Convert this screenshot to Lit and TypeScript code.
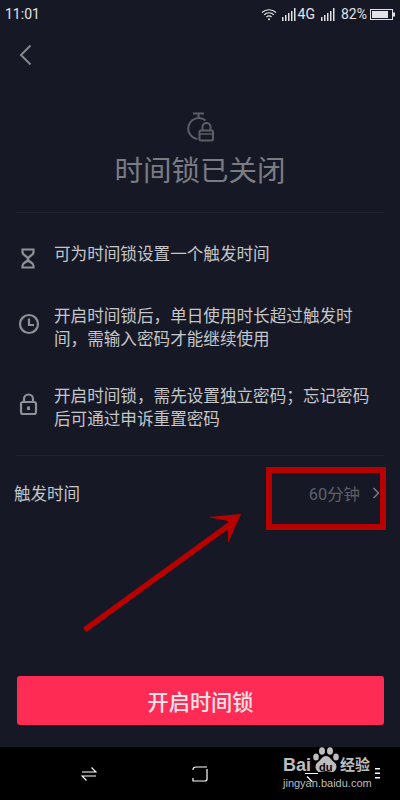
import { LitElement, html, css } from 'lit';
import { customElement } from 'lit/decorators.js';

@customElement('app-root')
export class AppRoot extends LitElement {
  static styles = css`
    :host {
      display: block;
      width: 400px;
      height: 800px;
      position: relative;
      overflow: hidden;
      background: #161925;
      font-family: 'Roboto', 'Noto Sans CJK SC', sans-serif;
    }
    .page {
      height: 800px;
      display: flex;
      flex-direction: column;
    }
    .status {
      height: 30px;
      flex: none;
      display: flex;
      align-items: center;
      justify-content: space-between;
      padding: 0 5px 2px;
      box-sizing: border-box;
      color: #e2e2e4;
      font-size: 14px;
    }
    .status-right {
      display: flex;
      align-items: center;
      font-size: 14px;
    }
    .status-right svg {
      display: block;
    }
    .wifi {
      margin-right: 5px;
    }
    .net {
      margin: 0 6px 0 2px;
    }
    .pct {
      margin: 0 3px 0 6px;
    }
    .nav {
      height: 50px;
      flex: none;
      padding-left: 18px;
      display: flex;
      align-items: center;
    }
    .hero {
      flex: none;
      height: 133px;
      display: flex;
      flex-direction: column;
      align-items: center;
      padding-top: 32px;
      box-sizing: border-box;
      border-bottom: 1px solid #1f222d;
      margin: 0 16px;
    }
    .hero-title {
      margin-top: 10px;
      font-size: 28.5px;
      line-height: 40px;
      color: #7b7c83;
    }
    .rules {
      flex: none;
      height: 243px;
      margin: 0 16px;
      box-sizing: border-box;
      border-bottom: 1px solid #1f222d;
      padding-top: 30px;
      display: flex;
      flex-direction: column;
      gap: 34px;
    }
    .rule {
      display: flex;
      align-items: flex-start;
      gap: 14px;
      font-size: 16.6px;
      line-height: 23px;
      color: #c5c6ca;
    }
    .rule:first-child {
      margin-bottom: 1px;
    }
    .rule svg {
      flex: none;
      width: 24px;
      height: 24px;
      margin-top: 7px;
    }
    .rule:first-child svg {
      margin-top: 3px;
    }
    .rule-text {
      width: 320px;
    }
    .trigger {
      flex: none;
      height: 74px;
      margin: 0 20px 0 14px;
      display: flex;
      align-items: center;
      justify-content: space-between;
      font-size: 16.5px;
      color: #c5c6ca;
    }
    .trigger-value {
      display: flex;
      align-items: center;
      gap: 12px;
      color: #5e6068;
      font-size: 16.4px;
    }
    .spacer {
      flex: 1;
    }
    .cta {
      flex: none;
      height: 49px;
      margin: 0 16px 22px 17px;
      border-radius: 3px;
      background: #fe2c55;
      color: #f6e3e8;
      font-size: 21.2px;
      font-weight: 500;
      display: flex;
      align-items: center;
      justify-content: center;
    }
    .softkeys {
      flex: none;
      height: 53px;
      background: #000;
      display: flex;
      align-items: center;
      padding-left: 81px;
      gap: 95px;
    }
    .softkeys svg {
      display: block;
    }
    .softkeys .menu {
      margin-left: -39px;
    }
    .mark {
      position: absolute;
      left: 283px;
      top: 747px;
      width: 90px;
      height: 53px;
      color: #bdbdbd;
    }
    .mark-bai {
      position: absolute;
      left: 0;
      top: 8px;
      font-family: 'Liberation Sans', sans-serif;
      font-size: 18px;
      font-weight: 700;
    }
    .mark-du {
      position: absolute;
      left: 36px;
      top: 14px;
      font-family: 'Liberation Sans', sans-serif;
      font-size: 11px;
      font-weight: 700;
      color: #000;
    }
    .mark-cn {
      position: absolute;
      left: 57px;
      top: 9px;
      font-size: 15px;
      font-weight: 700;
      line-height: 18px;
    }
    .mark-url {
      position: absolute;
      left: 0;
      top: 30px;
      font-family: 'Liberation Sans', sans-serif;
      font-size: 11px;
      white-space: nowrap;
    }
    .mark svg {
      position: absolute;
      left: 28px;
      top: 0;
    }
    .annot-box {
      position: absolute;
      left: 266px;
      top: 467px;
      width: 120px;
      height: 63px;
      box-sizing: border-box;
      border: 6px solid #b80000;
    }
    .annot-arrow {
      position: absolute;
      left: 0;
      top: 0;
    }
  `;

  render() {
    return html`
      <div class="page">
        <div class="status">
          <span>11:01</span>
          <div class="status-right">
            <svg class="wifi" width="16" height="13" viewBox="0 0 16 13" fill="none" stroke="#e2e2e4" stroke-width="1.2">
              <path d="M1 4.500C5 .8 11 .8 15 4.500" />
              <path d="M3.200 6.800C6 4.200 10 4.200 12.800 6.800" />
              <path d="M5.400 9C7 7.700 9 7.700 10.600 9" />
              <circle cx="8" cy="11.300" r="1" fill="#e2e2e4" stroke="none" />
            </svg>
            ${this.bars()}
            <span class="net">4G</span>
            ${this.bars()}
            <span class="pct">82%</span>
            <svg width="25" height="11" viewBox="0 0 25 11">
              <rect x="0.500" y="0.500" width="22" height="10" fill="none" stroke="#e2e2e4" />
              <rect x="2" y="2" width="16" height="7" fill="#e2e2e4" />
              <rect x="23" y="3.500" width="2" height="4" fill="#e2e2e4" />
            </svg>
          </div>
        </div>
        <div class="nav">
          <svg width="16" height="22" viewBox="0 0 16 22" fill="none" stroke="#85868c" stroke-width="2">
            <path d="M12.500 1.500 3 11l9.500 9.500" />
          </svg>
        </div>
        <div class="hero">
          <svg width="28" height="30" viewBox="0 0 28 30" fill="none" stroke="#5c5e65" stroke-width="2">
            <path d="M7 1.500h11M12.500 1.500V6" />
            <path d="M19.500 8.500A10.500 10.500 0 1 0 11.500 27" />
            <rect x="13.500" y="18.500" width="13.500" height="10" rx="1.500" />
            <path d="M16.500 18.500V15a4 4 0 0 1 8 0v3.500" />
            <path d="M14 22h12.500" stroke-width="1.500" />
          </svg>
          <div class="hero-title">时间锁已关闭</div>
        </div>
        <div class="rules">
          <div class="rule">
            <svg viewBox="0 0 24 24" fill="none" stroke="#8f9095" stroke-width="2.200">
              <path d="M5.500 3.500h13M6.500 3.500v3c0 3 5.500 3.500 5.500 6.500s-5.500 3.500-5.500 6.500v2h11v-2c0-3-5.500-3.500-5.500-6.500s5.500-3.500 5.500-6.500v-3" />
              <path d="M7 18.500c1-2 3-3 5-3s4 1 5 3" stroke-width="1.500" />
            </svg>
            <div class="rule-text">可为时间锁设置一个触发时间</div>
          </div>
          <div class="rule">
            <svg viewBox="0 0 24 24" fill="none" stroke="#8f9095" stroke-width="2.200">
              <circle cx="13" cy="12" r="9" />
              <path d="M13 6.500V13h5" />
            </svg>
            <div class="rule-text">开启时间锁后，单日使用时长超过触发时间，需输入密码才能继续使用</div>
          </div>
          <div class="rule">
            <svg viewBox="0 0 24 24" fill="none" stroke="#8f9095" stroke-width="2.200">
              <rect x="5" y="10" width="15" height="12" rx="2" />
              <path d="M8 10V7a4.500 4.500 0 0 1 9 0v3" />
              <path d="M12.500 14.500v3.500" stroke-width="3" />
            </svg>
            <div class="rule-text">开启时间锁，需先设置独立密码；忘记密码后可通过申诉重置密码</div>
          </div>
        </div>
        <div class="trigger">
          <span>触发时间</span>
          <div class="trigger-value">
            <span>60分钟</span>
            <svg width="8" height="12" viewBox="0 0 8 12" fill="none" stroke="#7b7c83" stroke-width="1.500">
              <path d="M1.500 1 6.500 6l-5 5" />
            </svg>
          </div>
        </div>
        <div class="spacer"></div>
        <div class="cta">开启时间锁</div>
        <div class="softkeys">
          <svg width="16" height="16" viewBox="0 0 16 16" fill="none" stroke="#fff" stroke-width="1.200">
            <path d="M1 6h14L10.500 1.500M15 10H1l4.500 4.500" />
          </svg>
          <svg width="16" height="16" viewBox="0 0 16 16" fill="none" stroke="#fff" stroke-width="1.200">
            <path d="M1 4c0-2 1-3 3-3h11M15 3v10c0 1.500-.5 2-2 2H1V12" />
          </svg>
          <svg width="16" height="16" viewBox="0 0 16 16" fill="none" stroke="#fff" stroke-width="1.200">
            <path d="M15 7.500H2M4 10.500l5.500 5.500" />
          </svg>
          <svg class="menu" width="5" height="11" viewBox="0 0 5 11" fill="#fff">
            <rect y="0" width="5" height="1.500" />
            <rect y="4.500" width="5" height="1.500" />
            <rect y="9" width="5" height="1.500" />
          </svg>
        </div>
      </div>
      <div class="mark">
        <span class="mark-bai">Bai</span>
        <svg width="30" height="27" viewBox="0 0 30 27" fill="#bdbdbd">
          <ellipse cx="5" cy="10" rx="2.800" ry="3.500" />
          <ellipse cx="11" cy="4" rx="3" ry="3.800" />
          <ellipse cx="19" cy="4" rx="3" ry="3.800" />
          <ellipse cx="25" cy="10" rx="2.800" ry="3.500" />
          <path d="M15 9c4 0 5 4 9 7 3 3 1 9-3 9-2 0-4-1-6-1s-4 1-6 1c-4 0-6-6-3-9 4-3 5-7 9-7z" />
        </svg>
        <span class="mark-du">du</span>
        <span class="mark-cn">经验</span>
        <span class="mark-url">jingyan.baidu.com</span>
      </div>
      <svg class="annot-arrow" width="400" height="800" viewBox="0 0 400 800" fill="none">
        <path d="M86.500 628.500 232 523" stroke="#b80000" stroke-width="5.500" stroke-linecap="round" />
        <path d="M241 514 208 517 228 521 228 543z" fill="#b80000" />
      </svg>
      <div class="annot-box"></div>
    `;
  }

  bars() {
    return html`<svg width="14" height="13" viewBox="0 0 14 13" fill="#e2e2e4">
      <rect x="0" y="9" width="1.500" height="4" />
      <rect x="3" y="7" width="1.500" height="6" />
      <rect x="6" y="5" width="1.500" height="8" />
      <rect x="9" y="3" width="1.500" height="10" />
      <rect x="12" y="0" width="1.500" height="13" />
    </svg>`;
  }
}
